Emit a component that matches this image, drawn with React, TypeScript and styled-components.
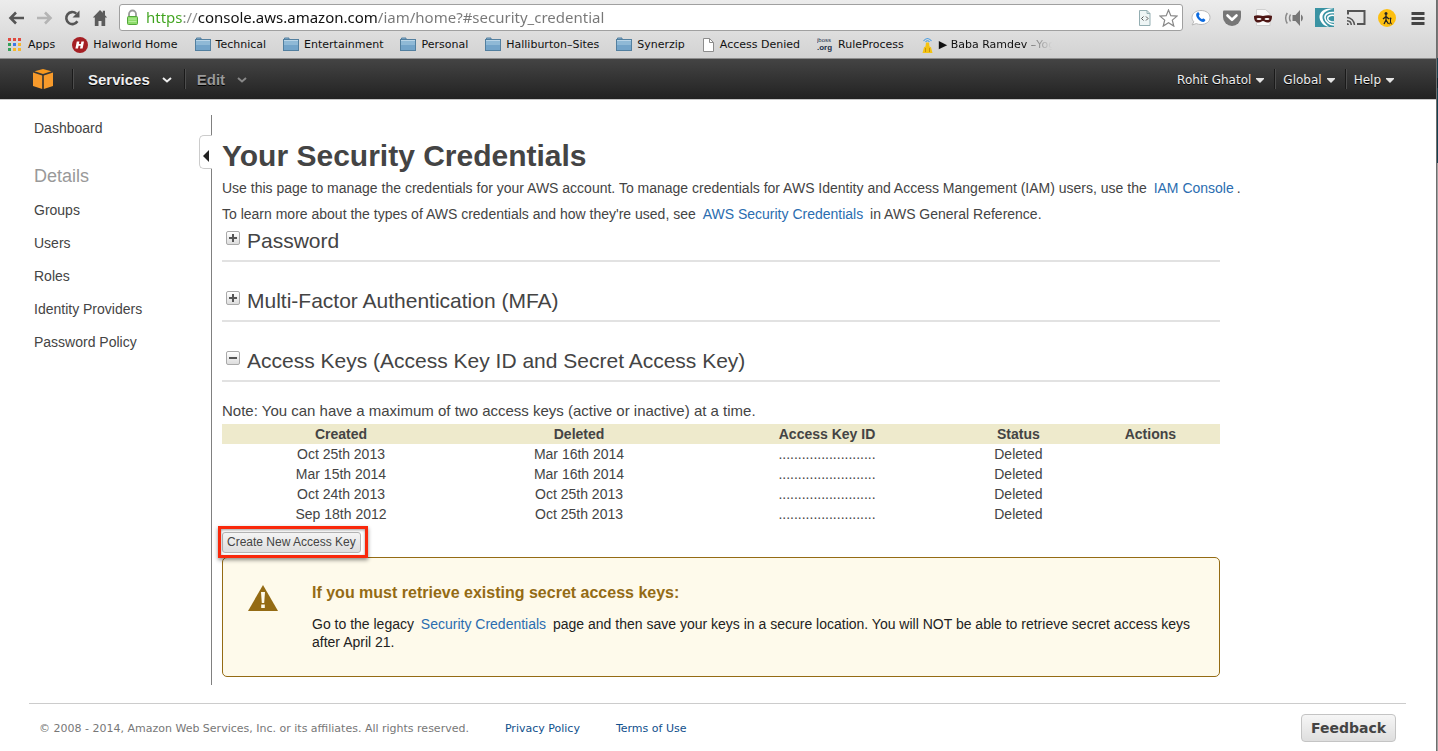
import React from 'react';
import styled, { createGlobalStyle, css } from 'styled-components';

const helvetica = '"Liberation Sans", Helvetica, Arial, sans-serif';
const lucida = '"Noto Sans", "Lucida Grande", sans-serif';
const verdana = '"DejaVu Sans", Verdana, sans-serif';

const GlobalStyle = createGlobalStyle`
  *, *::before, *::after { box-sizing: border-box; }
  html, body { margin: 0; background: #fff; }
  body { font-family: ${helvetica}; font-size: 14px; color: #444; }
  h1, h2, h3, p, ul { margin: 0; padding: 0; }
  ul { list-style: none; }
  a { text-decoration: none; color: inherit; }
  button { font: inherit; color: inherit; background: none; border: 0; padding: 0; cursor: pointer; }
  svg { display: block; flex: none; }
`;

const Screen = styled.div`
  display: flex;
  min-height: 100vh;
`;

const Browser = styled.div`
  flex: 1;
  min-width: 0;
`;

const Edge = styled.div`
  flex: none;
  width: 2px;
  border-left: 1px solid #6e6e6e;
  background: linear-gradient(#777 0 58px, #17404f 58px 78px, #0a2430 78px 88px, #16404f 88px 163px, #a2a2a2 163px);
`;

/* ---------- browser chrome ---------- */

const Chrome = styled.header`
  border-bottom: 1px solid #8c8c8c;
  background: linear-gradient(#ececec, #d2d2d2);
  padding-top: 4px;
`;

const Toolbar = styled.div`
  display: flex;
  align-items: center;
  height: 27px;
  padding: 0 8px;
`;

const NavButtons = styled.div`
  display: flex;
  gap: 11px;
  margin-right: 11px;
`;

const IconButton = styled.button`
  display: flex;
  align-items: center;
  justify-content: center;
`;

const AddressBar = styled.form`
  flex: 1;
  display: flex;
  align-items: center;
  gap: 7px;
  height: 27px;
  padding: 0 4px 0 6px;
  border: 1px solid #a0a0a0;
  border-radius: 3px;
  background: #fff;
`;

const UrlInput = styled.input`
  flex: 1;
  min-width: 0;
  height: 22px;
  padding: 0 0 2px;
  border: 0;
  outline: 0;
  font: 15px/20px ${lucida};
  color: transparent;
  background: linear-gradient(90deg, #3ea31c 0 37px, #888 37px 52px, #111 52px 232px, #777 232px);
  background-clip: text;
  -webkit-background-clip: text;
`;

const Extensions = styled.div`
  display: flex;
  gap: 11px;
  margin-left: 8px;
`;

const BookmarkBar = styled.nav`
  display: flex;
  align-items: center;
  gap: 17px;
  height: 27px;
  padding-top: 1px;
  padding-left: 7px;
  overflow: hidden;
`;

const Bookmark = styled.a<{ $faded?: boolean }>`
  display: flex;
  align-items: center;
  gap: 5px;
  font: 11px/16px ${verdana};
  color: #111;
  white-space: nowrap;
  ${(p) =>
    p.$faded &&
    css`
      width: 134px;
      overflow: hidden;
      mask-image: linear-gradient(90deg, #000 78%, rgba(0, 0, 0, 0.5) 84%, transparent 98%);
    `}
`;

/* ---------- AWS navigation ---------- */

const AwsNav = styled.nav`
  display: flex;
  align-items: center;
  height: 41px;
  padding: 0 42px 0 33px;
  border-bottom: 1px solid #c8c8c8;
  background: linear-gradient(#444, #222);
`;

const HomeLink = styled.a`
  margin-right: 19px;
`;

const NavItem = styled.button<{ $size: 'large' | 'small'; $dim?: boolean }>`
  display: flex;
  align-items: center;
  padding-top: 2px;
  text-shadow: 0 1px 0 #000;
  white-space: nowrap;
  color: ${(p) => (p.$dim ? '#999' : '#eee')};
  ${(p) =>
    p.$size === 'large'
      ? css`
          gap: 12px;
          padding-right: 12px;
          padding-left: ${p.$dim ? 11 : 14}px;
          font: bold 15px/20px ${helvetica};
        `
      : css`
          gap: 5px;
          padding-right: 10px;
          padding-left: 7px;
          font: 12px/20px ${verdana};
          &:last-child { padding-right: 0; }
        `}
`;

const NavRule = styled.span`
  width: 2px;
  height: 20px;
  border-left: 1px solid #1a1a1a;
  border-right: 1px solid #4d4d4d;
`;

const Spacer = styled.div`
  flex: 1;
`;

/* ---------- page ---------- */

const Page = styled.div`
  display: flex;
  padding: 15px 30px 0 34px;
`;

const Sidebar = styled.aside`
  position: relative;
  flex: none;
  width: 178px;
  min-height: 570px;
  border-right: 1px solid #808080;
`;

const SideList = styled.ul`
  display: flex;
  flex-direction: column;
  padding-top: 2px;
`;

const SideLink = styled.a`
  display: block;
  line-height: 33px;
`;

const SideTop = styled(SideLink)`
  line-height: 26px;
`;

const SideHeading = styled.h2`
  margin-top: 19px;
  font-size: 18px;
  font-weight: normal;
  line-height: 32px;
  color: #999;
`;

const Collapser = styled.button`
  position: absolute;
  top: 20px;
  right: -1px;
  display: flex;
  align-items: center;
  justify-content: flex-end;
  width: 13px;
  height: 34px;
  padding-right: 3px;
  padding-top: 8px;
  border: 1px solid #ccc;
  border-right: 0;
  border-radius: 5px 0 0 5px;
  background: #fff;
`;

const Content = styled.main`
  flex: 1;
  min-width: 0;
  max-width: 1048px;
  padding: 23px 0 0 10px;
`;

const Title = styled.h1`
  padding-bottom: 1px;
  font-size: 30px;
  line-height: 36px;
  font-weight: bold;
`;

const Lead = styled.p`
  line-height: 26px;
`;

const TextLink = styled.a`
  margin: 0 3px;
  color: #2a6db0;
`;

const Panels = styled.div`
  max-width: 998px;
`;

const SectionHead = styled.h2`
  margin-bottom: 25px;
  border-bottom: 2px solid #e2e2e2;
  font-size: 21px;
  font-weight: normal;
`;

const SectionToggle = styled.button`
  display: flex;
  align-items: flex-start;
  gap: 7px;
  width: 100%;
  height: 33px;
  padding: 4px 0 0 4px;
  line-height: 20px;
  text-align: left;
`;

const Sign = styled.span`
  display: flex;
  align-items: center;
  justify-content: center;
  width: 14px;
  height: 14px;
  border: 1px solid #aaa;
  border-radius: 2px;
  background: linear-gradient(#fff, #ddd);
`;

const Note = styled.p`
  font-size: 15px;
  line-height: 18px;
  padding-bottom: 4px;
  margin-top: -5px;
`;

const KeyTable = styled.table`
  width: 100%;
  table-layout: fixed;
  border-collapse: collapse;
  text-align: center;
  line-height: 20px;
`;

const HeadRow = styled.tr`
  background: #eeeacc;
`;

const Cell = styled.td`
  padding: 0;
`;

const HeadCell = styled.th<{ $share: number }>`
  width: ${(p) => p.$share * 100}%;
  padding: 0;
`;

const ActionRow = styled.div`
  position: relative;
  display: flex;
  height: 33px;
  padding-top: 8px;
`;

const CreateButton = styled.button`
  height: 21px;
  padding: 0 4px 2px;
  border: 1px solid #b5b5b5;
  border-radius: 3px;
  background: linear-gradient(#f4f4f4, #dedede);
  font-size: 12px;
  line-height: 16px;
`;

const Highlight = styled.span`
  position: absolute;
  top: 2px;
  left: -4px;
  width: 150px;
  height: 32px;
  border: 3px solid #f9280b;
  box-shadow: 0 2px 4px rgba(0, 0, 0, 0.45), inset 0 1px 3px rgba(0, 0, 0, 0.4);
  pointer-events: none;
`;

const Warning = styled.section`
  display: flex;
  gap: 34px;
  min-height: 120px;
  padding: 25px 6px 24px 25px;
  border: 1px solid #946b14;
  border-radius: 5px;
  background: #fefaeb;
`;

const WarningBody = styled.div`
  flex: 1;
  color: #222;
  line-height: 18px;
`;

const WarningTitle = styled.h3`
  margin-bottom: 12px;
  font-size: 16px;
  line-height: 20px;
  color: #946b14;
`;

const Footer = styled.footer`
  display: flex;
  align-items: flex-end;
  gap: 36px;
  margin: 18px 30px 0 29px;
  padding: 10px 10px 8px 10px;
  border-top: 1px solid #ccc;
  font: 11px/26px ${verdana};
  color: #777;
`;

const FooterLink = styled.a`
  color: #10508c;
`;

const FeedbackButton = styled.button`
  height: 28px;
  padding: 0 9px;
  border: 1px solid #c4c4c4;
  border-radius: 4px;
  background: linear-gradient(#f6f6f6, #dedede);
  font: bold 14px/26px ${verdana};
  color: #444;
`;

/* ---------- drawings ---------- */

const ArrowIcon = ({ forward }: { forward?: boolean }) => (
  <svg width="17" height="18" viewBox="0 0 17 18">
    <path
      d="M16 9H3M8 3.500 2.500 9l5.500 5.500"
      transform={forward ? 'translate(17 0) scale(-1 1)' : undefined}
      fill="none"
      stroke={forward ? '#b4b4b4' : '#555'}
      strokeWidth="2.600"
    />
  </svg>
);

const ReloadIcon = () => (
  <svg width="17" height="18" viewBox="0 0 17 18">
    <path d="M13.400 12.200A6 6 0 1 1 12.300 4.600" fill="none" stroke="#555" strokeWidth="2.600" />
    <path d="M15.500 1.500v7h-7z" fill="#555" />
  </svg>
);

const HomeIcon = () => (
  <svg width="16" height="18" viewBox="0 0 16 18">
    <path d="M8 1 .8 8.600h2V17h3.700v-5h3v5h3.700V8.600h2L13 6.200V1.800h-2.200v2z" fill="#5c5c5c" />
  </svg>
);

const LockIcon = () => (
  <svg width="13" height="17" viewBox="0 0 13 17">
    <path d="M3 9V5a3.500 3.500 0 0 1 7 0v4" fill="none" stroke="#9a9a9a" strokeWidth="1.800" />
    <rect x="1.500" y="7.500" width="10" height="8" rx="1" fill="#8edc6b" stroke="#52a63a" />
    <path d="M2.500 10h8M2.500 12.500h8" stroke="#b6ee9d" />
  </svg>
);

const SourceIcon = () => (
  <svg width="14" height="18" viewBox="0 0 14 18">
    <path d="M1.500 1.500h7.500l3 3v12h-10.500z" fill="#eef5f5" stroke="#94aeb2" />
    <path d="M9 1.500v3h3" fill="none" stroke="#94aeb2" />
    <path d="m5.500 7.500-2 2 2 2m2.500-4 2 2-2 2" fill="none" stroke="#555" />
  </svg>
);

const StarIcon = () => (
  <svg width="19" height="18" viewBox="0 0 19 18">
    <path d="m9.500 1 2.300 5.700 6.200.4-4.700 4 1.500 6-5.300-3.300-5.300 3.300 1.500-6L1 7.100l6.200-.4z" fill="#fff" stroke="#888" strokeWidth="1.200" />
  </svg>
);

const PhoneIcon = () => (
  <svg width="20" height="20" viewBox="0 0 20 20">
    <path d="M10 2.500c5 0 9 2.800 9 7s-4 7-9 7c-1.800 0-3.400-.3-4.700-.9L1 17l1.800-3.200C1.700 12.600 1 11.200 1 9.500c0-4.200 4-7 9-7z" fill="#fff" stroke="#b9b9b9" />
    <path d="M6.200 4.700c1-.6 1.500-.4 2 .6.500 1.200.6 1.600-.4 2.300.5 1.800 1.600 3 3.200 3.700.8-.9 1.300-.9 2.300-.3 1.200.7 1.300 1.200.7 2-1.300 1.600-3.700 1-6-1-2.700-2.400-3.800-6-1.800-7.300z" fill="#0c6be0" />
  </svg>
);

const PocketIcon = () => (
  <svg width="20" height="20" viewBox="0 0 20 20">
    <path d="M2 2.500h16q1 0 1 1V9a9 9 0 0 1-18 0V3.500q0-1 1-1z" fill="#777" />
    <path d="m5.500 7.500 4.500 4.300 4.500-4.300" fill="none" stroke="#fff" strokeWidth="2.600" strokeLinecap="round" strokeLinejoin="round" />
  </svg>
);

const MaskIcon = () => (
  <svg width="20" height="20" viewBox="0 0 20 20">
    <path d="M3.500 1.500h9l4.500 4V17.500H3.500z" fill="#fafafa" stroke="#d0d0d0" />
    <path d="M1 8c3-1.500 6-.6 9 0 3-.6 6-1.500 9 0 0 4-1 6.500-4.500 6.500-2.500 0-3-1.500-4.500-1.500S8 14.500 5.500 14.500C2 14.500 1 12 1 8z" fill="#4e1715" />
    <ellipse cx="6" cy="11" rx="2.500" ry="1.100" fill="#fff" />
    <ellipse cx="14" cy="11" rx="2.500" ry="1.100" fill="#fff" />
  </svg>
);

const SpeakerIcon = () => (
  <svg width="20" height="20" viewBox="0 0 20 20">
    <path d="M8.500 7h3L16 2v16l-4.500-5h-3z" fill="#777" />
    <path d="M17 6.500c2.500 1.500 2.500 5.500 0 7z" fill="#777" />
    <path d="M6.500 6.500Q4.500 10 6.500 13.500M3.300 5Q0 10 3.300 15.500" fill="none" stroke="#888" strokeWidth="1.500" />
  </svg>
);

const SwirlIcon = () => (
  <svg width="20" height="20" viewBox="0 0 20 20">
    <rect width="19" height="19" fill="#3a93a3" />
    <path d="M19 1C10-1 4 4 4.500 9.500 5 14 9 18.500 14 18.800 9 15 7.500 12 7.500 9 7.500 5 12 1.500 19 1z" fill="#fff" />
    <path d="M19 4.500C13 4 9.500 6.500 10 10c.4 3.500 4 6.500 9 7M19 7.500c-4-.6-6.500 1-6.300 3S15 14 19 14" fill="none" stroke="#fff" strokeWidth="1.500" />
  </svg>
);

const CastIcon = () => (
  <svg width="20" height="20" viewBox="0 0 20 20">
    <path d="M2 6.500V3h16.500v13H11" fill="none" stroke="#555" strokeWidth="2" />
    <path d="M1 9.500A8 8 0 0 1 8.500 17M1 12.700A4.500 4.500 0 0 1 5.300 17" fill="none" stroke="#555" strokeWidth="1.500" />
    <path d="M1 15v2h2a2 2 0 0 0-2-2z" fill="#555" />
  </svg>
);

const WalkIcon = () => (
  <svg width="20" height="20" viewBox="0 0 20 20">
    <circle cx="10" cy="10" r="9" fill="#fdbf10" />
    <circle cx="9" cy="5.500" r="1.500" fill="#222" />
    <path d="M9 7v5l-2 4M9 12l2.500 4M9 8.500 6 11M9 8.500l3 2.500" fill="none" stroke="#222" strokeWidth="1.300" />
    <circle cx="13.500" cy="10.500" r="1" fill="#222" />
    <path d="M13.500 11v3l-1 2.300M13.500 14l1 2.300" fill="none" stroke="#222" strokeWidth="1" />
  </svg>
);

const MenuIcon = () => (
  <svg width="20" height="20" viewBox="0 0 20 20">
    <path d="M3.500 5.500h13M3.500 10.500h13M3.500 15.500h13" stroke="#444" strokeWidth="3" />
  </svg>
);

const appsColors = ['#e04a3f', '#e04a3f', '#e04a3f', '#35a05a', '#3b78e7', '#f5b62d', '#35a05a', '#f5b62d', '#f5b62d'];

const AppsIcon = () => (
  <svg width="16" height="16" viewBox="0 0 16 16">
    {appsColors.map((fill, i) => (
      <rect key={i} x={1 + (i % 3) * 5} y={1 + Math.floor(i / 3) * 5} width="3" height="3" fill={fill} />
    ))}
  </svg>
);

const HIcon = () => (
  <svg width="16" height="16" viewBox="0 0 16 16">
    <circle cx="8" cy="8" r="8" fill="#a51f24" />
    <path d="M4.800 4.500h2.600l-.5 2.500h2l.5-2.500H12l-1.400 7H8l.6-2.700h-2L6 11.500H3.400z" fill="#fff" />
  </svg>
);

const FolderIcon = () => (
  <svg width="16" height="16" viewBox="0 0 16 16">
    <path d="M1.500 3V1h4.500v2z" fill="#8db6d4" stroke="#527f9f" />
    <rect x=".5" y="2.500" width="15" height="11" fill="#8fb9d6" stroke="#527f9f" />
    <path d="M1 3.500h14" stroke="#bbd6e8" />
    <path d="M1 8h14v5H1z" fill="#73a4c9" />
  </svg>
);

const PageIcon = () => (
  <svg width="13" height="16" viewBox="0 0 13 16">
    <path d="M1.500 1.500h6l4 4v9h-10z" fill="#fff" stroke="#8c8c8c" />
    <path d="M7.500 1.500v4h4" fill="none" stroke="#8c8c8c" />
  </svg>
);

const JbossIcon = () => (
  <svg width="16" height="20" viewBox="0 0 16 20">
    <text x="0" y="7" fontFamily="Liberation Sans, sans-serif" fontSize="6" fill="#223049">jboss</text>
    <text x="0" y="15" fontFamily="Liberation Sans, sans-serif" fontSize="8" fontWeight="bold" fill="#223049">.org</text>
  </svg>
);

const TowerIcon = () => (
  <svg width="13" height="16" viewBox="0 0 13 16">
    <path d="M2.500 4Q6.500-1 10.500 4M4.500 5Q6.500 2.500 8.500 5" fill="none" stroke="#4d9ee0" strokeWidth="1.200" />
    <path d="M5 5.500h3l.5 4 1.500.7L11.500 16h-10L3 10.200l1.500-.7z" fill="#f3c313" />
    <path d="M4.500 11v4M8.500 11v4" stroke="#c9930b" />
  </svg>
);

const CubeIcon = () => (
  <svg width="20" height="20" viewBox="0 0 20 20">
    <path d="m10 0 8.500 2.300L10 5 1.500 2.300z" fill="#f7981f" />
    <path d="M0 3.600 9.200 6.500V20L0 17zM20 3.600l-9.200 2.900V20L20 17z" fill="#f79a2b" />
  </svg>
);

const Chevron = ({ color }: { color: string }) => (
  <svg width="10" height="6" viewBox="0 0 10 6">
    <path d="m1 1 4 3.500L9 1" fill="none" stroke={color} strokeWidth="2" />
  </svg>
);

const Caret = () => (
  <svg width="8" height="5" viewBox="0 0 8 5">
    <path d="M0 0h8v1L4 5 0 1z" fill="#e4e4e4" />
  </svg>
);

const WarningIcon = () => (
  <svg width="30" height="30" viewBox="0 0 30 30">
    <path d="m15 2 15 26H0z" fill="#946b14" />
    <path d="M13 9h4l-.8 11h-2.400zM13.200 21.500h3.600V25h-3.600z" fill="#fefaeb" />
  </svg>
);

const bookmarks = [
  { label: 'Apps', icon: <AppsIcon /> },
  { label: 'Halworld Home', icon: <HIcon /> },
  { label: 'Technical', icon: <FolderIcon /> },
  { label: 'Entertainment', icon: <FolderIcon /> },
  { label: 'Personal', icon: <FolderIcon /> },
  { label: 'Halliburton–Sites', icon: <FolderIcon /> },
  { label: 'Synerzip', icon: <FolderIcon /> },
  { label: 'Access Denied', icon: <PageIcon /> },
  { label: 'RuleProcess', icon: <JbossIcon /> },
  { label: '▶ Baba Ramdev –Yog', icon: <TowerIcon />, faded: true },
];

const extensions = [
  { label: 'Voice', icon: <PhoneIcon /> },
  { label: 'Pocket', icon: <PocketIcon /> },
  { label: 'Incognito', icon: <MaskIcon /> },
  { label: 'Sound', icon: <SpeakerIcon /> },
  { label: 'Swirl', icon: <SwirlIcon /> },
  { label: 'Cast', icon: <CastIcon /> },
  { label: 'Walk', icon: <WalkIcon /> },
  { label: 'Menu', icon: <MenuIcon /> },
];

const sideItems = ['Groups', 'Users', 'Roles', 'Identity Providers', 'Password Policy'];

const columns = [
  { label: 'Created', share: 0.2385 },
  { label: 'Deleted', share: 0.2385 },
  { label: 'Access Key ID', share: 0.2585 },
  { label: 'Status', share: 0.125 },
  { label: 'Actions', share: 0.1395 },
];

const keys = [
  ['Oct 25th 2013', 'Mar 16th 2014'],
  ['Mar 15th 2014', 'Mar 16th 2014'],
  ['Oct 24th 2013', 'Oct 25th 2013'],
  ['Sep 18th 2012', 'Oct 25th 2013'],
];

const Section = ({ title, open }: { title: string; open?: boolean }) => (
  <SectionHead>
    <SectionToggle type="button" aria-expanded={!!open}>
      <Sign>
        <svg width="8" height="8" viewBox="0 0 8 8">
          <path d={open ? 'M0 4h8' : 'M0 4h8M4 0v8'} stroke="#555" strokeWidth="2" />
        </svg>
      </Sign>
      <span>{title}</span>
    </SectionToggle>
  </SectionHead>
);

export default function App() {
  return (
    <Screen>
      <GlobalStyle />
      <Browser>
        <Chrome>
          <Toolbar>
            <NavButtons>
              <IconButton type="button" aria-label="Back"><ArrowIcon /></IconButton>
              <IconButton type="button" aria-label="Forward"><ArrowIcon forward /></IconButton>
              <IconButton type="button" aria-label="Reload"><ReloadIcon /></IconButton>
              <IconButton type="button" aria-label="Home"><HomeIcon /></IconButton>
            </NavButtons>
            <AddressBar>
              <LockIcon />
              <UrlInput
                aria-label="Address"
                type="text"
                spellCheck={false}
                defaultValue="https://console.aws.amazon.com/iam/home?#security_credential"
              />
              <SourceIcon />
              <IconButton type="button" aria-label="Bookmark this page"><StarIcon /></IconButton>
            </AddressBar>
            <Extensions>
              {extensions.map((e) => (
                <IconButton key={e.label} type="button" aria-label={e.label}>{e.icon}</IconButton>
              ))}
            </Extensions>
          </Toolbar>
          <BookmarkBar aria-label="Bookmarks">
            {bookmarks.map((b) => (
              <Bookmark key={b.label} href="#" $faded={b.faded}>
                {b.icon}
                {b.label}
              </Bookmark>
            ))}
          </BookmarkBar>
        </Chrome>

        <AwsNav aria-label="AWS">
          <HomeLink href="#" aria-label="Console home"><CubeIcon /></HomeLink>
          <NavRule />
          <NavItem type="button" $size="large">Services<Chevron color="#eee" /></NavItem>
          <NavRule />
          <NavItem type="button" $size="large" $dim>Edit<Chevron color="#888" /></NavItem>
          <Spacer />
          <NavItem type="button" $size="small">Rohit Ghatol<Caret /></NavItem>
          <NavRule />
          <NavItem type="button" $size="small">Global<Caret /></NavItem>
          <NavRule />
          <NavItem type="button" $size="small">Help<Caret /></NavItem>
        </AwsNav>

        <Page>
          <Sidebar>
            <SideTop href="#">Dashboard</SideTop>
            <SideHeading>Details</SideHeading>
            <SideList>
              {sideItems.map((s) => (
                <li key={s}><SideLink href="#">{s}</SideLink></li>
              ))}
            </SideList>
            <Collapser type="button" aria-label="Collapse sidebar">
              <svg width="6" height="12" viewBox="0 0 6 12"><path d="M6 0v12L0 6z" fill="#222" /></svg>
            </Collapser>
          </Sidebar>

          <Content>
            <Title>Your Security Credentials</Title>
            <Lead>
              Use this page to manage the credentials for your AWS account. To manage credentials for AWS Identity and
              Access Mangement (IAM) users, use the <TextLink href="#">IAM Console</TextLink>.
            </Lead>
            <Lead>
              To learn more about the types of AWS credentials and how they're used, see{' '}
              <TextLink href="#">AWS Security Credentials</TextLink> in AWS General Reference.
            </Lead>
            <Panels>
              <Section title="Password" />
              <Section title="Multi-Factor Authentication (MFA)" />
              <Section title="Access Keys (Access Key ID and Secret Access Key)" open />
              <Note>Note: You can have a maximum of two access keys (active or inactive) at a time.</Note>
              <KeyTable>
                <thead>
                  <HeadRow>
                    {columns.map((c) => (
                      <HeadCell key={c.label} scope="col" $share={c.share}>{c.label}</HeadCell>
                    ))}
                  </HeadRow>
                </thead>
                <tbody>
                  {keys.map(([created, deleted]) => (
                    <tr key={created}>
                      <Cell>{created}</Cell>
                      <Cell>{deleted}</Cell>
                      <Cell>.........................</Cell>
                      <Cell>Deleted</Cell>
                      <Cell />
                    </tr>
                  ))}
                </tbody>
              </KeyTable>
              <ActionRow>
                <CreateButton type="button">Create New Access Key</CreateButton>
                <Highlight />
              </ActionRow>
              <Warning>
                <WarningIcon />
                <WarningBody>
                  <WarningTitle>If you must retrieve existing secret access keys:</WarningTitle>
                  <p>
                    Go to the legacy <TextLink href="#">Security Credentials</TextLink> page and then save your keys in a
                    secure location. You will NOT be able to retrieve secret access keys after April 21.
                  </p>
                </WarningBody>
              </Warning>
            </Panels>
          </Content>
        </Page>

        <Footer>
          <span>© 2008 - 2014, Amazon Web Services, Inc. or its affiliates. All rights reserved.</span>
          <FooterLink href="#">Privacy Policy</FooterLink>
          <FooterLink href="#">Terms of Use</FooterLink>
          <Spacer />
          <FeedbackButton type="button">Feedback</FeedbackButton>
        </Footer>
      </Browser>
      <Edge />
    </Screen>
  );
}
